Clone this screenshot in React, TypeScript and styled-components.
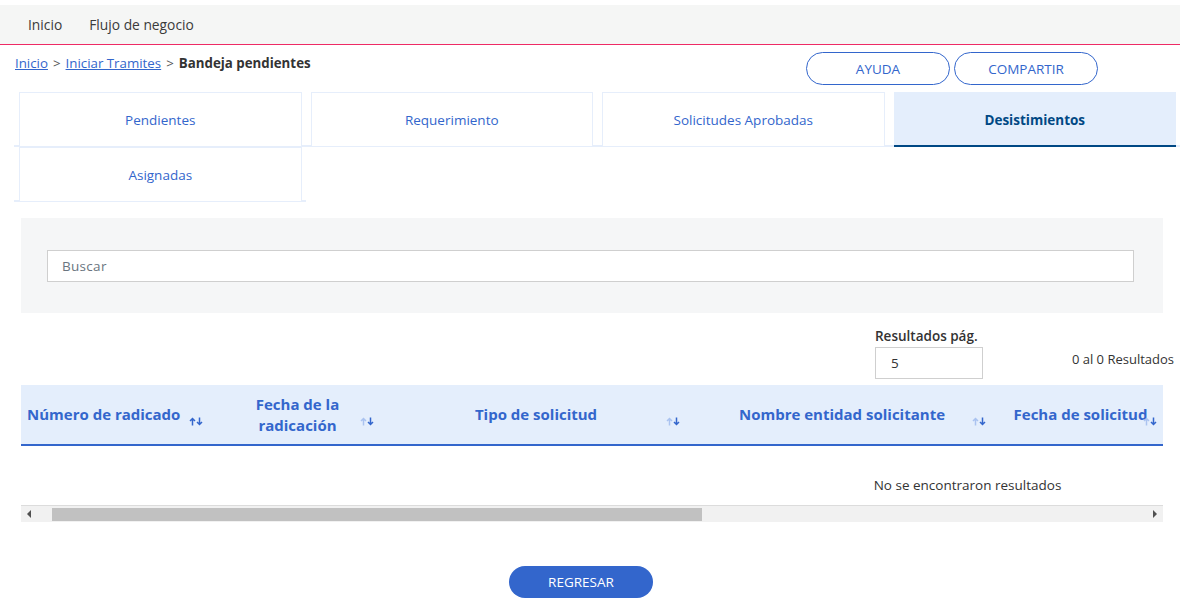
import React from "react";
import styled, { createGlobalStyle } from "styled-components";

const GlobalStyle = createGlobalStyle`
  html, body { margin: 0; padding: 0; background: #ffffff; }
  body { font-family: "Open Sans", "Noto Sans", Arial, sans-serif; color: #333333; font-size: 13px; }
  * { box-sizing: border-box; }
`;

const Page = styled.div`
  width: 1180px;
  padding-top: 5px;
`;

const TopBar = styled.nav`
  height: 40px;
  background: #f5f6f5;
  border-bottom: 1px solid #ee2a65;
  display: flex;
  align-items: center;
  padding-left: 28px;
  gap: 27px;
`;

const TopLink = styled.span`
  font-size: 13.8px;
  color: #3b3b3b;
`;

const HeaderRow = styled.div`
  display: flex;
  justify-content: space-between;
  align-items: flex-start;
  padding: 7px 82px 0 15px;
  height: 47px;
`;

const Crumbs = styled.div`
  font-size: 13.3px;
  display: flex;
  gap: 5px;
  color: #555;
  padding-top: 2px;
`;

const CrumbLink = styled.a`
  color: #3366cc;
  text-decoration: underline;
`;

const CrumbCurrent = styled.span`
  color: #333;
  font-weight: 700;
`;

const Buttons = styled.div`
  display: flex;
  gap: 4px;
`;

const OutlineButton = styled.button`
  width: 144px;
  height: 33px;
  border: 1px solid #3366cc;
  border-radius: 17px;
  background: #fff;
  color: #3366cc;
  font-family: inherit;
  font-size: 13.5px;
`;

const Tabs = styled.div`
  display: flex;
  flex-wrap: wrap;
  margin-left: 14px;
`;

const TabSlot = styled.div`
  width: 291.5px;
  padding: 0 4px 0 5px;
  border-bottom: 2px solid #e6eefb;
`;

const Tab = styled.div<{ $active?: boolean }>`
  height: 55px;
  display: flex;
  align-items: center;
  justify-content: center;
  padding-top: ${p => (p.$active ? "2px" : "0")};
  font-size: 13.5px;
  color: ${p => (p.$active ? "#004884" : "#3366cc")};
  font-weight: ${p => (p.$active ? 700 : 400)};
  background: ${p => (p.$active ? "#e4eefc" : "#fff")};
  border: ${p => (p.$active ? "none" : "1px solid #e6eefb")};
  border-bottom: ${p => (p.$active ? "2px solid #004884" : "1px solid #e6eefb")};
  margin-bottom: -2px;
`;

const Content = styled.div`
  padding: 16px 17px 0 21px;
`;

const SearchPanel = styled.div`
  background: #f5f6f7;
  height: 95px;
  padding: 32px 29px 0 26px;
`;

const SearchInput = styled.div`
  height: 32px;
  border: 1px solid #cfcfcf;
  background: #fff;
  display: flex;
  align-items: center;
  padding-left: 14px;
  font-size: 13.5px;
  color: #6a7580;
  letter-spacing: 0.3px;
`;

const ResultsRow = styled.div`
  display: flex;
  align-items: flex-end;
  padding: 15px 0 6px 854px;
  height: 72px;
`;

const PageSize = styled.div`
  display: flex;
  flex-direction: column;
  gap: 2px;
`;

const PageSizeLabel = styled.span`
  font-size: 13.5px;
  font-weight: 600;
  color: #333;
`;

const PageSizeBox = styled.div`
  width: 108px;
  height: 32px;
  border: 1px solid #cfcfcf;
  display: flex;
  align-items: center;
  padding-left: 15px;
  font-size: 13.5px;
  color: #333;
`;

const Count = styled.span`
  margin-left: auto;
  font-size: 13px;
  color: #333;
  align-self: center;
  padding-top: 10px;
  margin-right: -11px;
`;

const TableViewport = styled.div`
  overflow: hidden;
  width: 1142px;
`;

const Table = styled.div`
  width: 1893px;
`;

const HeadRow = styled.div`
  display: flex;
  height: 61px;
  background: #e4eefc;
  border-bottom: 2px solid #3366cc;
`;

const HeadCell = styled.div<{ $w: number; $left?: boolean; $nowrap?: boolean }>`
  position: relative;
  flex: 0 0 ${p => p.$w}px;
  display: flex;
  align-items: center;
  justify-content: ${p => (p.$left ? "flex-start" : "center")};
  padding: ${p => (p.$left ? "0 20px 0 6px" : p.$nowrap ? "0 4px" : "0 34px")};
  white-space: ${p => (p.$nowrap ? "nowrap" : "normal")};
  text-align: center;
  font-family: "Open Sans", Arial, sans-serif;
  font-weight: 700;
  font-size: 15px;
  line-height: 21px;
  color: #3366cc;
`;

const SortIcon = styled.svg`
  position: absolute;
  right: 8px;
  top: 32px;
`;

const EmptyRow = styled.div`
  height: 59px;
  display: flex;
  align-items: center;
  justify-content: center;
  font-size: 13.5px;
  color: #333;
  padding-top: 18px;
`;

const Scrollbar = styled.div`
  width: 1142px;
  height: 17px;
  background: #f1f1f1;
  border-top: 1px solid #dcdcdc;
  display: flex;
  align-items: center;
`;

const ScrollArrow = styled.div`
  width: 16px;
  height: 16px;
  display: flex;
  align-items: center;
  justify-content: center;
`;

const ScrollTrack = styled.div`
  flex: 1;
  height: 13px;
  padding-left: 15px;
`;

const ScrollThumb = styled.div`
  width: 650px;
  height: 13px;
  background: #c1c1c1;
`;

const Footer = styled.div`
  display: flex;
  justify-content: center;
  padding: 44px 18px 0 0;
  margin-left: -21px;
  margin-right: -17px;
`;

const PrimaryButton = styled.button`
  width: 144px;
  height: 32px;
  border: none;
  border-radius: 16px;
  background: #3366cc;
  color: #fff;
  font-family: inherit;
  font-size: 13.5px;
`;

const Sort = ({ upLight = true }: { upLight?: boolean }) => (
  <SortIcon width="15" height="9" viewBox="0 0 15 9">
    <g fill="none" strokeWidth="1.5">
      <path d="M3.5 8.5V1.5M1 4l2.5-2.5L6 4" stroke={upLight ? "#aac3f0" : "#3366cc"} />
      <path d="M10.5 0.5v7M8 5l2.5 2.5L13 5" stroke="#3366cc" />
    </g>
  </SortIcon>
);

const columns: { label: string; w: number; left?: boolean; light?: boolean; nowrap?: boolean }[] = [
  { label: "Número de radicado", w: 191, left: true, light: false },
  { label: "Fecha de la radicación", w: 171 },
  { label: "Tipo de solicitud", w: 306 },
  { label: "Nombre entidad solicitante", w: 306 },
  { label: "Fecha de solicitud", w: 171, nowrap: true },
  { label: "", w: 250 },
  { label: "", w: 498 },
];

const tabs = ["Pendientes", "Requerimiento", "Solicitudes Aprobadas", "Desistimientos", "Asignadas"];

export default function App() {
  return (
    <Page>
      <GlobalStyle />
      <TopBar>
        <TopLink>Inicio</TopLink>
        <TopLink>Flujo de negocio</TopLink>
      </TopBar>
      <HeaderRow>
        <Crumbs>
          <CrumbLink>Inicio</CrumbLink>
          <span>&gt;</span>
          <CrumbLink>Iniciar Tramites</CrumbLink>
          <span>&gt;</span>
          <CrumbCurrent>Bandeja pendientes</CrumbCurrent>
        </Crumbs>
        <Buttons>
          <OutlineButton>AYUDA</OutlineButton>
          <OutlineButton>COMPARTIR</OutlineButton>
        </Buttons>
      </HeaderRow>
      <Tabs>
        {tabs.map(t => (
          <TabSlot key={t}>
            <Tab $active={t === "Desistimientos"}>{t}</Tab>
          </TabSlot>
        ))}
      </Tabs>
      <Content>
        <SearchPanel>
          <SearchInput>Buscar</SearchInput>
        </SearchPanel>
        <ResultsRow>
          <PageSize>
            <PageSizeLabel>Resultados pág.</PageSizeLabel>
            <PageSizeBox>5</PageSizeBox>
          </PageSize>
          <Count>0 al 0 Resultados</Count>
        </ResultsRow>
        <TableViewport>
          <Table>
            <HeadRow>
              {columns.map((c, i) => (
                <HeadCell key={i} $w={c.w} $left={c.left} $nowrap={c.nowrap}>
                  {c.label}
                  {c.label && <Sort upLight={c.light !== false} />}
                </HeadCell>
              ))}
            </HeadRow>
            <EmptyRow>No se encontraron resultados</EmptyRow>
          </Table>
        </TableViewport>
        <Scrollbar>
          <ScrollArrow>
            <svg width="6" height="8" viewBox="0 0 6 8"><path d="M5 0v8L1 4z" fill="#505050" /></svg>
          </ScrollArrow>
          <ScrollTrack>
            <ScrollThumb />
          </ScrollTrack>
          <ScrollArrow>
            <svg width="6" height="8" viewBox="0 0 6 8"><path d="M1 0v8l4-4z" fill="#505050" /></svg>
          </ScrollArrow>
        </Scrollbar>
        <Footer>
          <PrimaryButton>REGRESAR</PrimaryButton>
        </Footer>
      </Content>
    </Page>
  );
}
